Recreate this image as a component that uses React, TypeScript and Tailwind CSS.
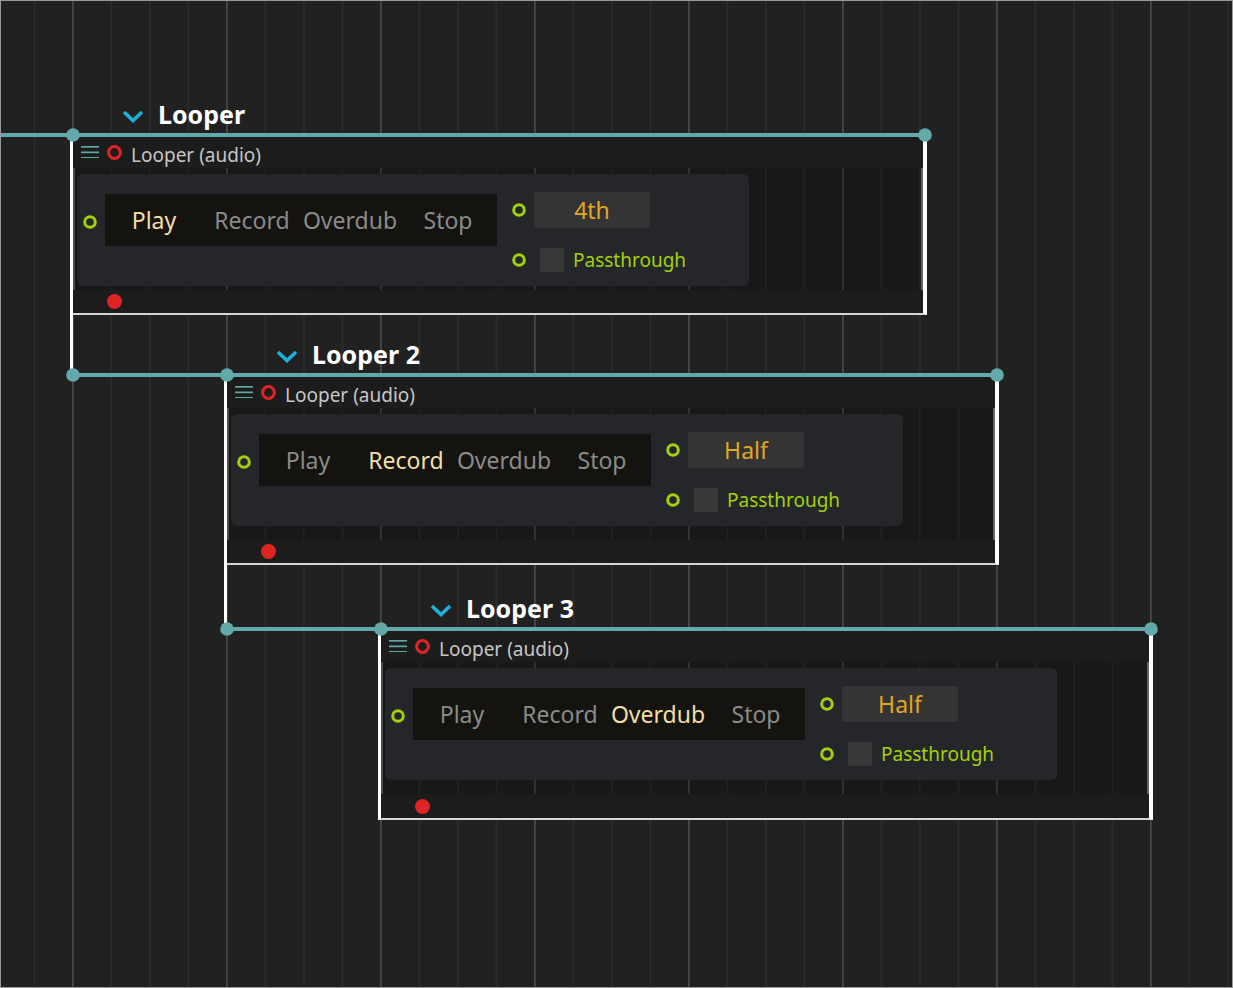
import React from "react";

type NodeDef = {
  pos: string;
  bodyH: string;
  footerH: string;
  title: string;
  active: number;
  value: string;
};

const nodes: NodeDef[] = [
  { pos: "left-[73px] top-[96px] w-[854px]", bodyH: "h-[122px]", footerH: "h-[23px]", title: "Looper", active: 0, value: "4th" },
  { pos: "left-[227px] top-[336px] w-[772px]", bodyH: "h-[132px]", footerH: "h-[23px]", title: "Looper 2", active: 1, value: "Half" },
  { pos: "left-[381px] top-[590px] w-[772px]", bodyH: "h-[132px]", footerH: "h-[24px]", title: "Looper 3", active: 2, value: "Half" },
];

const modes = ["Play", "Record", "Overdub", "Stop"];

function Port() {
  return (
    <svg width="14" height="14" viewBox="0 0 14 14" className="shrink-0">
      <circle cx="7" cy="7" r="5.3" fill="none" stroke="#a2d10b" strokeWidth="3" />
    </svg>
  );
}

function GridBg() {
  const xs: { x: number; major: boolean }[] = [];
  for (let k = -1; k < 31; k++) {
    const x = 73 + 38.5 * k;
    if (x > 0 && x < 1233) xs.push({ x, major: k % 4 === 0 });
  }
  return (
    <svg className="absolute inset-0" width="1233" height="988">
      {xs.map((l, i) => (
        <rect key={i} x={l.x - 1} y={0} width={1.8} height={988} fill={l.major ? "#474747" : "#2c2c2c"} />
      ))}
    </svg>
  );
}

function Wires() {
  const teal = "#64a9aa";
  const dots = [
    [73, 135],
    [925, 135],
    [73, 375],
    [227, 375],
    [997, 375],
    [227, 629],
    [381, 629],
    [1151, 629],
  ];
  return (
    <svg className="pointer-events-none absolute inset-0" width="1233" height="988">
      <rect x={70} y={137} width={3} height={238} fill="#ffffff" />
      <rect x={224} y={377} width={3} height={252} fill="#ffffff" />
      <rect x={378} y={631} width={3} height={189} fill="#ffffff" />
      <rect x={0} y={133} width={925} height={4} fill={teal} />
      <rect x={73} y={373} width={924} height={4} fill={teal} />
      <rect x={227} y={627} width={924} height={4} fill={teal} />
      {dots.map(([x, y], i) => (
        <circle key={i} cx={x} cy={y} r={6.8} fill={teal} />
      ))}
    </svg>
  );
}

function LooperNode({ n }: { n: NodeDef }) {
  return (
    <div className={`absolute ${n.pos}`}>
      <div className="flex h-[37px] items-center pl-[49px]">
        <svg width="22" height="13" viewBox="0 0 22 13" className="mt-[3px]">
          <path d="M2 2 L11 10.5 L20 2" fill="none" stroke="#1bb1d9" strokeWidth="3.6" strokeLinecap="butt" strokeLinejoin="miter" />
        </svg>
        <span className="ml-[14px] text-[25px] leading-[37px] font-bold text-white">{n.title}</span>
      </div>
      <div className="h-[4px]" />
      <div className="border-r-4 border-b-2 border-r-white border-b-[#d6d6d6]">
        <div className="flex h-[31px] items-center bg-[#1c1c1c] pl-[8px]">
          <svg width="18" height="13" viewBox="0 0 18 13" className="mb-[2px]">
            <rect x="0" y="1" width="18" height="1.7" fill="#5ea7a9" />
            <rect x="0" y="6.5" width="18" height="1.7" fill="#5ea7a9" />
            <rect x="0" y="12" width="18" height="1.7" fill="#5ea7a9" />
          </svg>
          <svg width="15" height="15" viewBox="0 0 15 15" className="mb-[1px] ml-[8px]">
            <circle cx="7.5" cy="7.5" r="5.9" fill="none" stroke="#e02424" strokeWidth="3" />
          </svg>
          <span className="mt-[5px] ml-[9px] text-[19px] text-[#c6c6c6]">Looper (audio)</span>
        </div>
        <div className={`${n.bodyH} border-r-2 border-l-2 border-r-[#666666] border-l-[#4e4e4e] bg-black/25 pt-[6px] pl-[2px]`}>
          <div className="flex h-[112px] w-[672px] items-start rounded-[6px] bg-[#25262a]">
            <div className="flex items-center pt-[20px] pl-[6px]">
              <div className="mt-[3px]">
                <Port />
              </div>
              <div className="ml-[8px] grid h-[52px] w-[392px] grid-cols-4 items-center bg-[#141310] text-[23px]">
                {modes.map((m, i) => (
                  <span key={m} className={`text-center ${i === n.active ? "text-[#f2dfa6]" : "text-[#8a8a8a]"}`}>
                    {m}
                  </span>
                ))}
              </div>
            </div>
            <div className="ml-[15px] flex flex-col pt-[18px]">
              <div className="flex h-[36px] items-center">
                <Port />
                <div className="ml-[8px] flex h-[36px] w-[116px] items-center justify-center rounded-[2px] bg-[#343434] text-[23px] text-[#e0a822]">
                  {n.value}
                </div>
              </div>
              <div className="mt-[20px] flex h-[24px] items-center">
                <Port />
                <div className="ml-[14px] h-[24px] w-[24px] bg-[#383838]" />
                <span className="ml-[9px] text-[19px] text-[#a2d10b]">Passthrough</span>
              </div>
            </div>
          </div>
        </div>
        <div className={`flex ${n.footerH} items-center bg-[#1c1c1c] pl-[34px]`}>
          <div className="h-[15px] w-[15px] rounded-full bg-[#e02424]" />
        </div>
      </div>
    </div>
  );
}

export default function App() {
  return (
    <div className="relative h-[988px] w-[1233px] overflow-hidden bg-[#212121] font-['Noto_Sans',sans-serif]">
      <GridBg />
      {nodes.map((n) => (
        <LooperNode key={n.title} n={n} />
      ))}
      <Wires />
      <div className="pointer-events-none absolute inset-0 border border-[#9a9a9a]" />
    </div>
  );
}
